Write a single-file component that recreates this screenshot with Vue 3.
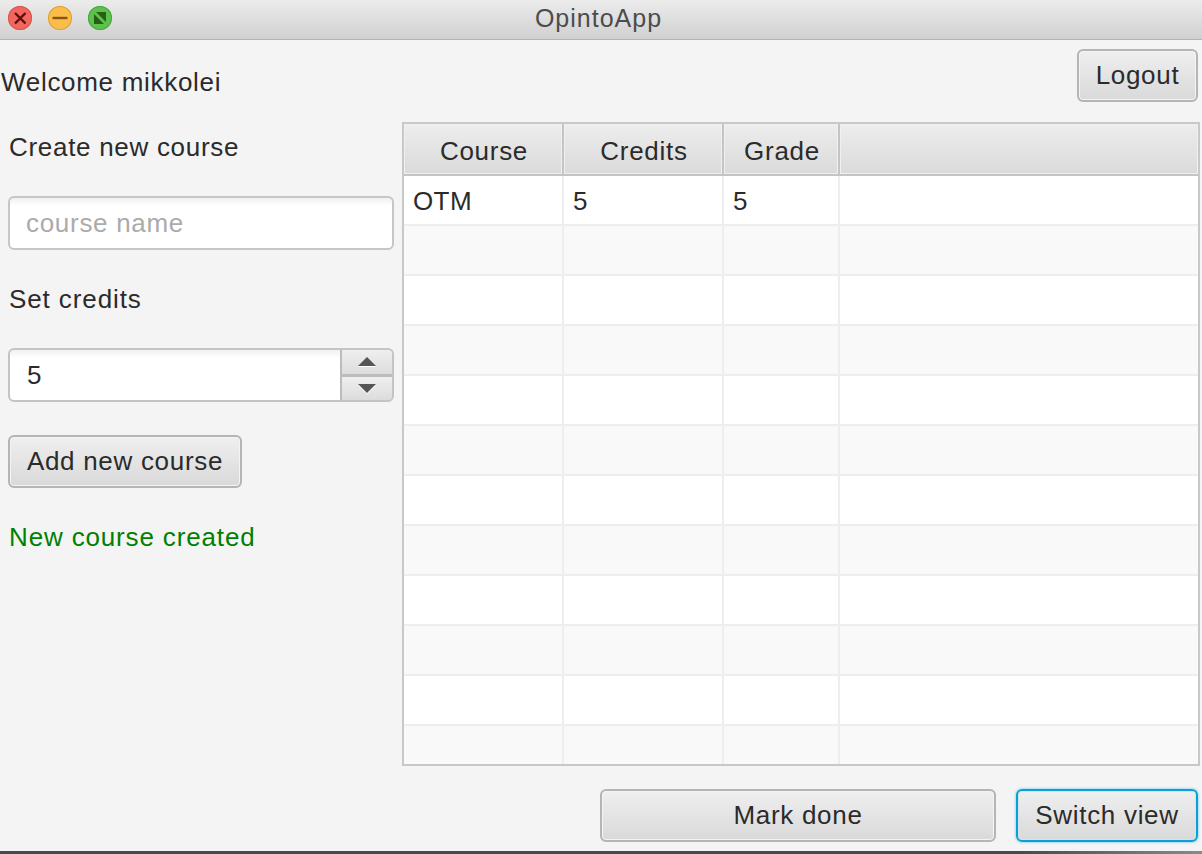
<template>
  <div class="window">
    <header class="titlebar">
      <div class="lights">
        <span class="light red">
          <svg width="24" height="24" viewBox="0 0 24 24"><path d="M7 7 L17.5 17.5 M17.5 7 L7 17.5" stroke="#5a0f0c" stroke-width="2.4" /></svg>
        </span>
        <span class="light yellow">
          <svg width="24" height="24" viewBox="0 0 24 24"><path d="M4.5 12 H19.5" stroke="#8a5210" stroke-width="2.4" /></svg>
        </span>
        <span class="light green">
          <svg width="24" height="24" viewBox="0 0 24 24"><path d="M8 6 H18 V16 Z M6 8 V18 H16 Z" fill="#2a5e12" /></svg>
        </span>
      </div>
      <span class="title">OpintoApp</span>
    </header>

    <div class="top">
      <span class="welcome">Welcome mikkolei</span>
      <button class="btn logout">Logout</button>
    </div>

    <main class="middle">
      <section class="side">
        <label class="lbl first">Create new course</label>
        <input class="field" type="text" placeholder="course name" />
        <label class="lbl second">Set credits</label>
        <div class="spinner">
          <input class="spin-input" type="text" :value="credits" />
          <div class="spin-btns">
            <span class="spin-btn"><i class="arrow up"></i></span>
            <span class="spin-btn"><i class="arrow down"></i></span>
          </div>
        </div>
        <button class="btn add">Add new course</button>
        <p class="msg">New course created</p>
      </section>

      <section class="table">
        <div class="row head">
          <div v-for="c in columns" :key="c" class="hcell">{{ c }}</div>
        </div>
        <div v-for="(r, i) in rows" :key="i" class="row body" :class="{ odd: i % 2 === 1, last: i === rows.length - 1 }">
          <div v-for="(v, j) in r" :key="j" class="cell">{{ v }}</div>
        </div>
      </section>
    </main>

    <footer class="bottom">
      <button class="btn mark">Mark done</button>
      <button class="btn switch">Switch view</button>
    </footer>
    <div class="edge"></div>
  </div>
</template>

<script setup>
const credits = 5;
const columns = ["Course", "Credits", "Grade", ""];
const rows = [["OTM", "5", "5", ""]];
for (let i = 0; i < 11; i++) rows.push(["", "", "", ""]);
</script>

<style>
html,
body {
  margin: 0;
  background: #f4f4f4;
}
</style>

<style scoped>
.window {
  width: 1202px;
  height: 854px;
  display: flex;
  flex-direction: column;
  overflow: hidden;
  background: #f4f4f4;
  color: #2b2b2b;
  font-family: "Liberation Sans", Arial, sans-serif;
  font-size: 26px;
  letter-spacing: 0.7px;
}
.titlebar {
  flex: none;
  display: flex;
  align-items: center;
  justify-content: center;
  position: relative;
  background: linear-gradient(#ececec, #d0d0d0);
  border-bottom: 1px solid #b4b4b4;
  padding: 0 5px 2px 0;
  height: 37px;
}
.lights {
  position: absolute;
  left: 8px;
  top: 6px;
  display: flex;
  gap: 16px;
}
.light {
  width: 24px;
  height: 24px;
  border-radius: 50%;
  box-sizing: border-box;
  display: block;
}
.light svg {
  display: block;
}
.red {
  background: #f1675f;
  box-shadow: inset 0 0 0 1px #d9534c;
}
.yellow {
  background: #fbbd4a;
  box-shadow: inset 0 0 0 1px #dfa03c;
}
.green {
  background: #5cc24e;
  box-shadow: inset 0 0 0 1px #48a63c;
}
.title {
  font-size: 25px;
  letter-spacing: 1px;
  color: #4c4c4c;
}
.top {
  height: 82px;
  flex: none;
  display: flex;
  justify-content: space-between;
  align-items: flex-start;
  padding-right: 4px;
}
.welcome {
  margin-top: 27px;
  line-height: 30px;
  padding-left: 1px;
}
.btn {
  font: inherit;
  letter-spacing: inherit;
  color: #2b2b2b;
  height: 53px;
  padding: 0;
  box-sizing: border-box;
  border: 2px solid #b5b5b5;
  border-radius: 6px;
  background: linear-gradient(#efefef, #d9d9d9);
  box-shadow: inset 0 0 0 1px #f4f4f4;
}
.logout {
  width: 121px;
  margin-top: 9px;
}
.middle {
  height: 644px;
  flex: none;
  display: flex;
}
.side {
  width: 402px;
  flex: none;
  padding-left: 8px;
  box-sizing: border-box;
  display: flex;
  flex-direction: column;
  align-items: flex-start;
}
.lbl {
  line-height: 30px;
  padding-left: 1px;
}
.first {
  margin-top: 10px;
}
.second {
  margin-top: 34px;
  letter-spacing: 0.9px;
}
.field {
  font: inherit;
  letter-spacing: inherit;
  width: 386px;
  height: 54px;
  margin-top: 34px;
  padding: 0 16px;
  box-sizing: border-box;
  border: 2px solid #c6c6c6;
  border-radius: 6px;
  background: linear-gradient(#f1f1f1, #fff 8px);
  outline: none;
}
.field::placeholder {
  color: #ababab;
  opacity: 1;
}
.spinner {
  width: 386px;
  height: 54px;
  margin-top: 34px;
  box-sizing: border-box;
  display: flex;
  border: 2px solid #c4c4c4;
  border-radius: 6px;
  overflow: hidden;
  background: linear-gradient(#f1f1f1, #fff 8px);
}
.spin-input {
  font: inherit;
  letter-spacing: inherit;
  color: #2b2b2b;
  flex: 1;
  min-width: 0;
  border: 0;
  padding: 0 17px;
  background: transparent;
  outline: none;
}
.spin-btns {
  width: 52px;
  flex: none;
  display: flex;
  flex-direction: column;
  gap: 3px;
  background: #bcbcbc;
  border-left: 2px solid #bcbcbc;
  box-sizing: border-box;
}
.spin-btn {
  flex: 1;
  display: flex;
  align-items: center;
  justify-content: center;
  background: linear-gradient(#efefef, #dcdcdc);
}
.arrow {
  width: 0;
  height: 0;
  border-left: 9px solid transparent;
  border-right: 9px solid transparent;
  filter: drop-shadow(0 1px 0 #fff);
}
.up {
  border-bottom: 9px solid #555;
}
.down {
  border-top: 9px solid #555;
}
.add {
  width: 234px;
  margin-top: 33px;
  padding-bottom: 1px;
}
.msg {
  margin: 34px 0 0;
  padding-left: 1px;
  line-height: 30px;
  letter-spacing: 0.85px;
  color: #008000;
}
.table {
  width: 798px;
  height: 644px;
  flex: none;
  box-sizing: border-box;
  border: 2px solid #c8c8c8;
  background: #f9f9f9;
  overflow: hidden;
}
.row {
  display: grid;
  grid-template-columns: 160px 160px 116px 1fr;
}
.head {
  height: 52px;
  background: #c4c4c4;
  border-bottom: 2px solid #c4c4c4;
  box-sizing: border-box;
}
.hcell {
  display: flex;
  align-items: center;
  justify-content: center;
  padding: 5px 0 0 2px;
  margin-right: 2px;
  background: linear-gradient(#ededed, #dadada);
  box-shadow: inset 0 0 0 1px #f0f0f0;
}
.hcell:last-child {
  margin-right: 0;
}
.body {
  height: 50px;
  background: #fff;
  box-sizing: border-box;
  border-bottom: 2px solid #eeeeee;
}
.odd {
  background: #f9f9f9;
}
.last {
  border-bottom: 0;
}
.cell {
  padding-left: 9px;
  line-height: 50px;
  letter-spacing: 0.4px;
  border-right: 2px solid #eeeeee;
}
.cell:last-child {
  border-right: 0;
}
.bottom {
  height: 85px;
  flex: none;
  display: flex;
  justify-content: flex-end;
  align-items: flex-start;
  gap: 20px;
  padding-right: 4px;
  box-sizing: border-box;
}
.mark {
  width: 396px;
  margin-top: 23px;
  padding-bottom: 1px;
}
.switch {
  width: 182px;
  margin-top: 23px;
  padding-bottom: 1px;
  border-color: #0a9fd8;
  box-shadow: 0 0 2px 1px #a9dcf0, inset 0 0 0 1px #cfe6f0;
}
.edge {
  height: 4px;
  flex: none;
  background: linear-gradient(90deg, #4a4a4a 85%, #8a8a8a);
}
</style>
